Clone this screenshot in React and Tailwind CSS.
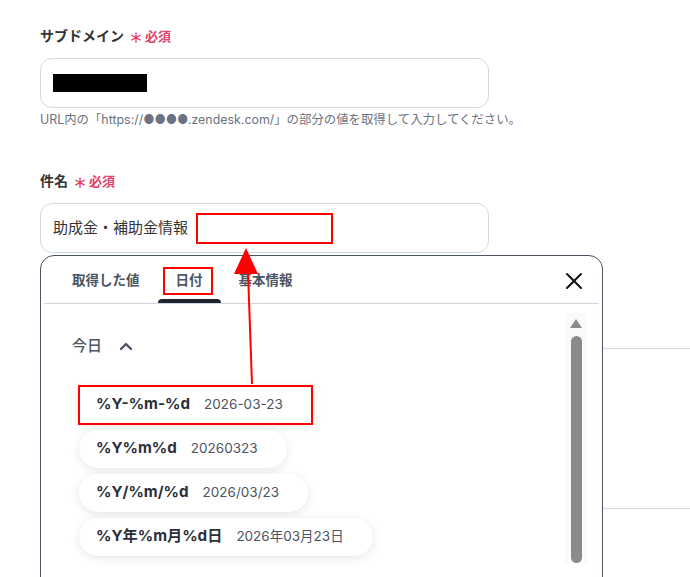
import { useState } from 'react'

const FONT = { fontFamily: 'Inter, "Noto Sans CJK JP", sans-serif' }

const TABS = ['取得した値', '日付', '基本情報']

const FORMATS = [
  { fmt: '%Y-%m-%d', sample: '2026-03-23', marked: true },
  { fmt: '%Y%m%d', sample: '20260323' },
  { fmt: '%Y/%m/%d', sample: '2026/03/23' },
  { fmt: '%Y年%m月%d日', sample: '2026年03月23日' },
]

function Required() {
  return (
    <span className="ml-[5px] inline-flex items-center gap-[2px] text-[#e4416a] font-semibold">
      <span className="text-[14px] leading-none relative top-[1px]" style={{ fontFamily: '"Noto Sans CJK JP", sans-serif' }}>＊</span>
      <span className="text-[13px]">必須</span>
    </span>
  )
}

function FieldLabel({ children }) {
  return (
    <div className="h-[20px] leading-[20px] text-[14px] font-semibold text-[#333] flex items-center">
      {children}
      <Required />
    </div>
  )
}

function CloseIcon() {
  return (
    <svg width="18" height="18" viewBox="0 0 18 18" fill="none" stroke="#111" strokeWidth="2" strokeLinecap="round">
      <path d="M2 2 L16 16 M16 2 L2 16" />
    </svg>
  )
}

function ChevronUp() {
  return (
    <svg width="14" height="10" viewBox="0 0 14 10" fill="none" stroke="#4b5563" strokeWidth="2.4" strokeLinecap="round" strokeLinejoin="round">
      <path d="M2 8 L7 3 L12 8" />
    </svg>
  )
}

function DatePicker() {
  const [tab, setTab] = useState(1)

  return (
    <div className="absolute left-0 top-full mt-[2px] w-[563px] h-[360px] bg-white border border-[#4b5563] rounded-t-[14px] px-[3px] z-10">
      {/* tabs */}
      <div className="relative h-[48px] flex items-end pl-[10px] pr-[16px] border-b border-[#cfd6e0]">
        {TABS.map((t, i) => (
          <button
            key={t}
            onClick={() => setTab(i)}
            className="relative h-full px-[18px] text-[13.5px] font-semibold text-[#4b5563]"
          >
            <span className="relative top-[1px]">{t}</span>
            {tab === i && (
              <span className="absolute left-0 right-0 bottom-0 h-[4px] rounded-t-[4px] bg-[#1f2530]" />
            )}
          </button>
        ))}
        <span className="absolute left-[119px] top-[11px] w-[50px] h-[28px] border-2 border-[#f00]" />
        <button className="ml-auto self-center mt-[2px]">
          <CloseIcon />
        </button>
      </div>

      {/* body */}
      <div className="relative flex">
        <div className="flex-1 pl-[28px] pt-[31px]">
          <div className="flex items-center gap-[17px] text-[15px] font-medium text-[#4b5563]">
            <span>今日</span>
            <ChevronUp />
          </div>
          <div className="mt-[28px] ml-[7px] flex flex-col items-start gap-[6px]">
            {FORMATS.map((f) => (
              <div
                key={f.fmt}
                className={`h-[38px] flex items-center gap-[14px] pl-[17px] pr-[29px] rounded-full bg-white shadow-[0_2px_10px_rgba(0,0,0,0.10)] ${
                  f.marked ? 'outline-2 outline-[#f00] rounded-none -outline-offset-1' : ''
                }`}
              >
                <span className="text-[15.2px] font-bold text-[#2a2f38]">{f.fmt}</span>
                <span className="text-[13.5px] text-[#4b5563]">{f.sample}</span>
              </div>
            ))}
          </div>
        </div>
        {/* scrollbar */}
        <div className="w-[22px] mr-[12px] mt-[9px] bg-[#fafafa] flex flex-col items-center pt-[6px]">
          <svg width="12" height="9" viewBox="0 0 12 9">
            <path d="M6 0 L12 9 L0 9 Z" fill="#8b8b8b" />
          </svg>
          <div className="mt-[8px] w-[11px] h-[227px] rounded-full bg-[#8b8b8b]" />
        </div>
      </div>
    </div>
  )
}

export default function App() {
  return (
    <div className="relative w-[690px] h-[577px] overflow-hidden bg-white" style={FONT}>
      <div className="pl-[40px] pt-[26px]">
        <FieldLabel>サブドメイン</FieldLabel>
        <div className="mt-[12px] w-[449px] h-[50px] rounded-[12px] border border-[#d3d9e3] flex items-center pl-[12px]">
          <div className="w-[94px] h-[18px] bg-black" />
        </div>
        <p className="mt-[4px] text-[12.4px] leading-[16px] text-[#6b7280] whitespace-nowrap">
          URL内の「https://●●●●.zendesk.com/」の部分の値を取得して入力してください。
        </p>

        <div className="mt-[43px]">
          <FieldLabel>件名</FieldLabel>
        </div>
        <div className="relative mt-[12px] w-[449px]">
          <div className="h-[50px] rounded-[12px] border border-[#d3d9e3] flex items-center pl-[12px] gap-[8px]">
            <span className="text-[15px] text-[#333]">助成金・補助金情報</span>
            <span className="w-[137px] h-[31px] border-2 border-[#f00]" />
          </div>
          <DatePicker />
        </div>
      </div>

      {/* rows of the form behind the picker */}
      <div className="ml-[460px] mt-[95px] border-t border-[#d3d9e3] h-[161px] border-b" />

      {/* annotation arrow */}
      <svg className="absolute left-0 top-0 pointer-events-none z-20" width="690" height="577">
        <line x1="252" y1="384" x2="248" y2="272" stroke="#f00" strokeWidth="2" />
        <path d="M246 248 L258 274 L234 274 Z" fill="#f00" />
      </svg>
    </div>
  )
}
